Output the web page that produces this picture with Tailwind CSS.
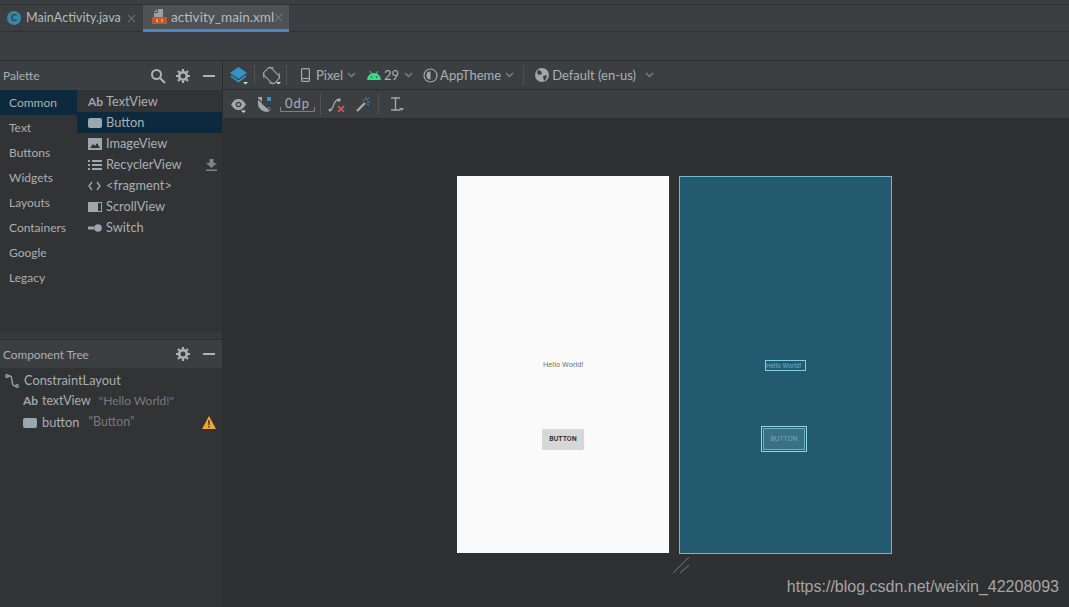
<!DOCTYPE html>
<html lang="en">
<head>
    <meta charset="UTF-8">
    <title>activity_main.xml</title>
    <script src="https://cdn.jsdelivr.net/npm/@tailwindcss/browser@4"></script>
</head>
<body class="bg-[#2f3032] overflow-hidden">
    <div class="w-[1069px] h-[607px] flex flex-col font-['Lato','Noto_Sans',sans-serif] text-[12.8px] text-[#a9b0b3] overflow-hidden">
        <!-- Top strip -->
        <div class="h-[5px] bg-[#3c3f41] border-b border-[#2f3133] shrink-0"></div>

        <!-- Tabs -->
        <div class="h-[27px] bg-[#3c3f41] border-b border-[#2f3133] flex shrink-0">
            <div class="w-[143px] flex items-center pl-[7px]">
                <div class="w-[14px] h-[14px] rounded-full bg-[#3a87a5] text-[#1f3c4a] text-[9px] font-bold flex items-center justify-center">C</div>
                <span class="ml-[5px] text-[#b4babd] text-[12.6px]">MainActivity.java</span>
                <svg class="ml-auto mr-[7px]" width="9" height="9" viewBox="0 0 9 9" stroke="#666a6c" stroke-width="1.1"><path d="M1 1l7 7M8 1l-7 7"/></svg>
            </div>
            <div class="w-[146px] h-[27px] bg-[#4e5254] border-b-[3px] border-[#4a88c7] flex items-center pl-[9px]">
                <svg class="shrink-0" width="15" height="16" viewBox="0 0 15 16"><path d="M5 0h6v8H2V3z" fill="#9a9fa2"/><path d="M5.500 0v3.500H2" stroke="#4e5254" fill="none"/><rect y="8" width="15" height="7" fill="#c4562a"/><path d="M6 10l-2 1.500L6 13M9 10l2 1.500L9 13" stroke="#f2d5c8" fill="none"/></svg>
                <span class="ml-[4px] text-[#b4babd] text-[13.6px] whitespace-nowrap">activity_main.xml</span>
                <svg class="ml-auto mr-[6px] shrink-0" width="9" height="9" viewBox="0 0 9 9" stroke="#6d7173" stroke-width="1.1"><path d="M1 1l7 7M8 1l-7 7"/></svg>
            </div>
        </div>

        <!-- Breadcrumb bar -->
        <div class="h-[29px] bg-[#3c3f41] border-b border-[#2b2d2f] shrink-0"></div>

        <div class="flex-1 flex min-h-0">
            <!-- Left side -->
            <aside class="w-[223px] shrink-0 flex flex-col border-r border-[#2b2d2f] bg-[#313335]">
                <div class="h-[29px] bg-[#3c3f41] flex items-center pl-[3px] pr-[7px] shrink-0">
                    <span class="flex-1 text-[#a9b0b3] text-[12px] pt-px">Palette</span>
                    <svg width="16" height="16" viewBox="0 0 16 16" fill="none" stroke="#afb1b3" stroke-width="2"><circle cx="6.500" cy="6.500" r="4.500"/><path d="M10 10l5 5"/></svg>
                    <svg class="ml-[10px]" width="14" height="14" viewBox="0 0 14 14"><circle cx="7" cy="7" r="3.800" fill="none" stroke="#afb1b3" stroke-width="2.600"/><path d="M7 0v2.200M7 11.800V14M0 7h2.200M11.800 7H14M2 2l1.600 1.600M10.400 10.400L12 12M12 2l-1.600 1.600M3.600 10.400L2 12" stroke="#afb1b3" stroke-width="2.200"/></svg>
                    <div class="ml-[13px] w-[12px] h-[2px] bg-[#afb1b3]"></div>
                </div>

                <div class="flex h-[243px] shrink-0">
                    <div class="w-[77px] shrink-0 text-[12px]">
                        <div class="h-[25px] flex items-center pl-[9px] pt-px bg-[#0d293e]">Common</div>
                        <div class="h-[25px] flex items-center pl-[9px] pt-px">Text</div>
                        <div class="h-[25px] flex items-center pl-[9px] pt-px">Buttons</div>
                        <div class="h-[25px] flex items-center pl-[9px] pt-px">Widgets</div>
                        <div class="h-[25px] flex items-center pl-[9px] pt-px">Layouts</div>
                        <div class="h-[25px] flex items-center pl-[9px] pt-px">Containers</div>
                        <div class="h-[25px] flex items-center pl-[9px] pt-px">Google</div>
                        <div class="h-[25px] flex items-center pl-[9px] pt-px">Legacy</div>
                    </div>
                    <div class="flex-1 pt-[1px]">
                        <div class="h-[21px] flex items-center pl-[11px] pt-px"><span class="w-[18px] text-[12px] font-bold text-[#9aa7b0]">Ab</span>TextView</div>
                        <div class="h-[21px] flex items-center pl-[11px] pt-px bg-[#0d293e]"><span class="w-[14px] h-[10px] rounded-[2px] bg-[#9aa7b0] mr-[4px]"></span>Button</div>
                        <div class="h-[21px] flex items-center pl-[11px] pt-px">
                            <svg class="mr-[4px]" width="14" height="12" viewBox="0 0 14 12"><rect width="14" height="12" fill="#9aa7b0"/><path d="M2 10l3-4 2 2 2-3 3 5z" fill="#313335"/></svg>ImageView
                        </div>
                        <div class="h-[21px] flex items-center pl-[11px] pt-px">
                            <svg class="mr-[4px]" width="14" height="10" viewBox="0 0 14 10" fill="#9aa7b0"><path d="M0 0h2v2H0zM4 0h10v2H4zM0 4h2v2H0zM4 4h10v2H4zM0 8h2v2H0zM4 8h10v2H4z"/></svg>RecyclerView
                            <svg class="ml-auto mr-[5px]" width="11" height="12" viewBox="0 0 11 12" fill="#7f8587"><path d="M3.500 0h4v4H11L5.500 9 0 4h3.500zM0 10.500h11V12H0z"/></svg>
                        </div>
                        <div class="h-[21px] flex items-center pl-[11px] pt-px">
                            <svg class="mr-[5px]" width="13" height="10" viewBox="0 0 13 10" fill="none" stroke="#9aa7b0" stroke-width="1.400"><path d="M4 1L1 5l3 4M9 1l3 4-3 4"/></svg>&lt;fragment&gt;
                        </div>
                        <div class="h-[21px] flex items-center pl-[11px] pt-px">
                            <svg class="mr-[4px]" width="14" height="10" viewBox="0 0 14 10"><rect width="14" height="10" fill="#9aa7b0"/><rect x="10" y="1" width="3" height="8" fill="#313335"/></svg>ScrollView
                        </div>
                        <div class="h-[21px] flex items-center pl-[11px] pt-px">
                            <svg class="mr-[4px]" width="14" height="8" viewBox="0 0 14 8" fill="#9aa7b0"><rect y="2.500" width="6" height="3"/><circle cx="10" cy="4" r="3.800"/></svg>Switch
                        </div>
                    </div>
                </div>

                <!-- Divider -->
                <div class="h-[7px] bg-[#36383a] border-b border-[#2b2d2f] shrink-0"></div>

                <!-- Component tree -->
                <div class="h-[28px] bg-[#3c3f41] flex items-center pl-[3px] pr-[7px] shrink-0">
                    <span class="flex-1 text-[11.8px] pt-[2px]">Component Tree</span>
                    <svg width="14" height="14" viewBox="0 0 14 14"><circle cx="7" cy="7" r="3.800" fill="none" stroke="#afb1b3" stroke-width="2.600"/><path d="M7 0v2.200M7 11.800V14M0 7h2.200M11.800 7H14M2 2l1.600 1.600M10.400 10.400L12 12M12 2l-1.600 1.600M3.600 10.400L2 12" stroke="#afb1b3" stroke-width="2.200"/></svg>
                    <div class="ml-[13px] w-[12px] h-[2px] bg-[#afb1b3]"></div>
                </div>
                <div class="pt-[2px]">
                    <div class="h-[21px] flex items-center pl-[5px]">
                        <svg class="mr-[5px]" width="14" height="14" viewBox="0 0 14 14" fill="none" stroke="#9aa7b0" stroke-width="1.300"><circle cx="2" cy="2" r="1.300"/><circle cx="12" cy="12" r="1.300"/><path d="M3.300 2H5c2 0 1.500 2 2 5s.5 5 3.700 5"/></svg>ConstraintLayout
                    </div>
                    <div class="h-[21px] flex items-baseline pt-[1px] pl-[23px]"><span class="w-[19px] text-[12px] font-bold text-[#9aa7b0]">Ab</span><span class="text-[12.4px]">textView</span><span class="ml-[8px] text-[12px] text-[#767b7e]">"Hello World!"</span></div>
                    <div class="h-[21px] flex items-center pl-[23px] pr-[6px]"><span class="w-[14px] h-[10px] rounded-[2px] bg-[#9aa7b0] mr-[5px]"></span><span>button</span><span class="ml-[9px] text-[12.4px] text-[#767b7e]">"Button"</span>
                        <svg class="ml-auto" width="14" height="13" viewBox="0 0 14 13"><path d="M7 0l7 13H0z" fill="#f0a732"/><path d="M6.300 4h1.400v5H6.300zM6.300 10h1.400v1.500H6.300z" fill="#3a3020"/></svg>
                    </div>
                </div>
            </aside>

            <!-- Design area -->
            <main class="flex-1 flex flex-col min-w-0">
                <div class="h-[29px] bg-[#3c3f41] border-b border-[#2b2d2f] flex items-center pl-[7px] shrink-0 text-[13px]">
                    <svg width="17" height="17" viewBox="0 0 17 17" class="overflow-visible"><path d="M8.500 0L17 6l-8.500 6L0 6z" fill="#3592c4"/><path d="M1 9l7.500 5.500L16 9" fill="none" stroke="#3592c4" stroke-width="1.800"/><path d="M13 15h5l-2.500 2.500z" fill="#d5d7d8"/></svg>
                    <div class="ml-[7px] w-px h-[20px] bg-[#4f5254]"></div>
                    <svg class="ml-[8px] overflow-visible" width="17" height="17" viewBox="0 0 17 17" fill="none" stroke="#a3a7a9" stroke-width="1"><rect x="3.500" y="1" width="10" height="15" rx="1.500" transform="rotate(-45 8.500 8.500)"/><path d="M1 11a8 8 0 0 1 0-5M6 1a8 8 0 0 1 5 0M16 6a8 8 0 0 1 0 5M11 16a8 8 0 0 1-5 0"/><path d="M13 15h5l-2.500 2.500z" fill="#d5d7d8" stroke="none"/></svg>
                    <div class="ml-[6px] w-px h-[20px] bg-[#4f5254]"></div>
                    <svg class="ml-[14px]" width="9" height="14" viewBox="0 0 9 14" fill="none" stroke="#a3a7a9" stroke-width="1.200"><rect x=".6" y=".6" width="7.800" height="12.800" rx="1"/><path d="M1 10.500h7"/></svg>
                    <span class="ml-[6px] pt-px">Pixel</span>
                    <svg class="ml-[4px]" width="9" height="6" viewBox="0 0 9 6" fill="none" stroke="#7d8183" stroke-width="1.300"><path d="M1 1l3.500 3.500L8 1"/></svg>
                    <svg class="ml-[11px]" width="14" height="10" viewBox="0 0 14 10" fill="#3ddc84"><path d="M0 10a7 7 0 0 1 14 0z"/><path d="M3 1l2 3M11 1L9 4" stroke="#3ddc84"/><circle cx="4.500" cy="7" r=".8" fill="#3c3f41"/><circle cx="9.500" cy="7" r=".8" fill="#3c3f41"/></svg>
                    <span class="ml-[3px] pt-px">29</span>
                    <svg class="ml-[5px]" width="9" height="6" viewBox="0 0 9 6" fill="none" stroke="#7d8183" stroke-width="1.300"><path d="M1 1l3.500 3.500L8 1"/></svg>
                    <svg class="ml-[10px]" width="15" height="15" viewBox="0 0 15 15"><circle cx="7.500" cy="7.500" r="6.500" fill="none" stroke="#a3a7a9" stroke-width="1.200"/><path d="M7.500 3.500a4 4 0 0 0 0 8z" fill="#a3a7a9"/></svg>
                    <span class="ml-[2px] pt-px">AppTheme</span>
                    <svg class="ml-[4px]" width="9" height="6" viewBox="0 0 9 6" fill="none" stroke="#7d8183" stroke-width="1.300"><path d="M1 1l3.500 3.500L8 1"/></svg>
                    <div class="ml-[9px] w-px h-[20px] bg-[#4f5254]"></div>
                    <svg class="ml-[11px]" width="14" height="14" viewBox="0 0 14 14"><circle cx="7" cy="7" r="7" fill="#a3a7a9"/><path d="M3 2l3 1 1 3-3 1-2-2zM8 8l4-1-1 4-2 2z" fill="#3c3f41"/></svg>
                    <span class="ml-[3px] pt-px">Default (en-us)</span>
                    <svg class="ml-[9px]" width="9" height="6" viewBox="0 0 9 6" fill="none" stroke="#7d8183" stroke-width="1.300"><path d="M1 1l3.500 3.500L8 1"/></svg>
                </div>
                <div class="h-[29px] bg-[#3c3f41] border-b border-[#2b2d2f] flex items-center pl-[8px] shrink-0">
                    <svg class="overflow-visible" width="15" height="11" viewBox="0 0 15 11"><path d="M0 5.500C3 1 5 0 7.500 0S12 1 15 5.500C12 10 10 11 7.500 11S3 10 0 5.500z" fill="#a3a7a9"/><circle cx="7.500" cy="5.500" r="2.800" fill="#3c3f41"/><circle cx="7.500" cy="5.500" r="1.500" fill="#a3a7a9"/><path d="M10 11.500h5l-2.500 2.500z" fill="#d5d7d8"/></svg>
                    <svg class="ml-[11px]" width="15" height="16" viewBox="0 0 15 16"><path d="M1 1h4v7l5 4 2-1 2 3c-2 2-5 2-7 1.500C3 14 1 11 1 8z" fill="#a3a7a9"/><path d="M0 2l14 13" stroke="#3c3f41" stroke-width="1.200"/><rect x="10" y="1" width="4" height="4" fill="#3592c4"/></svg>
                    <div class="ml-[8px] w-[35px] h-[16px] relative text-center text-[13px] tracking-[1px] leading-[15px]">0dp
                        <svg class="absolute left-0 bottom-0" width="35" height="5" viewBox="0 0 35 5" fill="none" stroke="#7d8183"><path d="M.5 0v4.500h34V0"/></svg>
                    </div>
                    <div class="ml-[5px] w-px h-[20px] bg-[#4f5254]"></div>
                    <svg class="ml-[7px]" width="18" height="15" viewBox="0 0 18 15"><path d="M2 13c4 0 3-10 8-10" fill="none" stroke="#a3a7a9" stroke-width="1.300"/><circle cx="2" cy="13" r="1.500" fill="#a3a7a9"/><circle cx="11" cy="3" r="1.800" fill="#a3a7a9"/><path d="M10 9l6 6M16 9l-6 6" stroke="#c75450" stroke-width="1.800"/></svg>
                    <svg class="ml-[10px]" width="15" height="15" viewBox="0 0 15 15"><path d="M1 14l8-8" stroke="#a3a7a9" stroke-width="2.400"/><path d="M10 0v3M14 5h-3M13 1l-2 2M7 2l1 2M13 8l-2-1" stroke="#3592c4"/></svg>
                    <div class="ml-[7px] w-px h-[20px] bg-[#4f5254]"></div>
                    <svg class="ml-[11px]" width="14" height="15" viewBox="0 0 14 15" fill="none" stroke="#a3a7a9" stroke-width="1.400"><path d="M1 1h9M1 13h9M5.500 1v12"/><path d="M9 11h5l-2.500 3z" fill="#a3a7a9" stroke="none"/></svg>
                </div>

                <!-- Canvas -->
                <div class="flex-1 relative bg-[#2f3032]">
                    <div class="absolute left-[234px] top-[57px] w-[212px] h-[377px] bg-[#fafafa]">
                        <span class="absolute left-[86px] top-[183px] text-[7.5px] leading-[12px] text-[#757575] font-['Roboto',sans-serif]">Hello World!</span>
                        <div class="absolute left-[85px] top-[253px] w-[42px] h-[20px] bg-[#d6d7d7] rounded-[1px] shadow-[0_1px_1px_rgba(0,0,0,0.15)] flex items-center justify-center text-[7px] font-medium text-[#222] font-['Roboto',sans-serif]">BUTTON</div>
                    </div>
                    <div class="absolute left-[456px] top-[57px] w-[213px] h-[378px] bg-[#235a6f] border border-[#6fb8cc]">
                        <div class="absolute left-[85px] top-[183px] w-[41px] h-[11px] border border-[#7fd0e4] text-[6.5px] leading-[10px] text-[#76b4c6] overflow-hidden whitespace-nowrap font-['Roboto',sans-serif]">Hello World!</div>
                        <div class="absolute left-[81px] top-[249px] w-[46px] h-[26px] border border-[#8fd8ea] p-px">
                            <div class="w-full h-full border border-[#8fd8ea]/60 bg-[#3a7184] flex items-center justify-center text-[7px] text-[#6fa9bb] font-['Roboto',sans-serif]">BUTTON</div>
                        </div>
                    </div>
                    <svg class="absolute left-[449px] top-[437px]" width="20" height="18" viewBox="0 0 20 18" fill="none" stroke="#8a8c8e" stroke-width=".8"><path d="M1 17L17 1M8 17l9-8"/></svg>
                    <span class="absolute right-[10px] top-[458px] font-['Liberation_Sans',sans-serif] text-[16px] leading-[20px] text-[#a6a6a6]">https://blog.csdn.net/weixin_42208093</span>
                </div>
            </main>
        </div>
    </div>
</body>
</html>
